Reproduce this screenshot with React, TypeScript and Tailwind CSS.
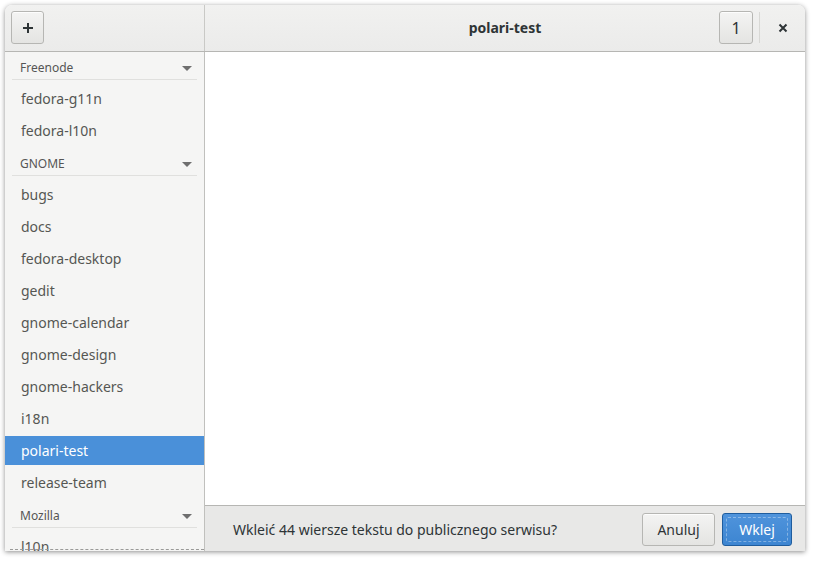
import React from 'react';

type Row = { kind: 'net'; name: string; first?: boolean } | { kind: 'room'; name: string; selected?: boolean };

const rows: Row[] = [
  { kind: 'net', name: 'Freenode', first: true },
  { kind: 'room', name: 'fedora-g11n' },
  { kind: 'room', name: 'fedora-l10n' },
  { kind: 'net', name: 'GNOME' },
  { kind: 'room', name: 'bugs' },
  { kind: 'room', name: 'docs' },
  { kind: 'room', name: 'fedora-desktop' },
  { kind: 'room', name: 'gedit' },
  { kind: 'room', name: 'gnome-calendar' },
  { kind: 'room', name: 'gnome-design' },
  { kind: 'room', name: 'gnome-hackers' },
  { kind: 'room', name: 'i18n' },
  { kind: 'room', name: 'polari-test', selected: true },
  { kind: 'room', name: 'release-team' },
  { kind: 'net', name: 'Mozilla' },
  { kind: 'room', name: 'l10n' },
];

function Arrow() {
  return (
    <svg width="10" height="5" viewBox="0 0 10 5" className="shrink-0">
      <path d="M0 0H10L5 5Z" fill="#6f6f6f" />
    </svg>
  );
}

export default function App() {
  return (
    <div
      className="w-[814px] h-[561px] bg-white pt-[5px] pl-[5px] overflow-hidden"
      style={{ fontFamily: '"Noto Sans", "Open Sans", sans-serif' }}
    >
      <div className="w-[800px] h-[546px] flex flex-col rounded-t-[7px] overflow-hidden shadow-[0_1px_5px_rgba(0,0,0,0.45)] bg-white">
        {/* Header bar */}
        <div className="h-[47px] flex shrink-0 border-b border-[#b6b6b3] bg-gradient-to-b from-[#f1f1f0] to-[#ebebea]">
          <div className="w-[200px] border-r border-[#c9c9c6] flex items-start pt-[6px] pl-[6px]">
            <button className="w-[33px] h-[33px] rounded-[3px] border border-[#b6b6b3] bg-gradient-to-b from-[#f4f4f3] to-[#e4e4e2] flex items-center justify-center shadow-[inset_0_1px_rgba(255,255,255,0.8)]">
              <svg width="12" height="12" viewBox="0 0 12 12">
                <path d="M6 1V11M1 6H11" stroke="#2e3436" strokeWidth="2" />
              </svg>
            </button>
          </div>
          <div className="flex-1 flex items-start relative">
            <div className="absolute inset-x-0 top-[14px] text-center text-[14px] font-bold text-[#2e3436] leading-[18px]">
              polari-test
            </div>
            <div className="ml-auto flex items-start pt-[6px]">
              <button className="w-[34px] h-[33px] rounded-[3px] border border-[#b6b6b3] bg-gradient-to-b from-[#f4f4f3] to-[#e4e4e2] text-[16px] text-[#2e3436] flex items-center justify-center shadow-[inset_0_1px_rgba(255,255,255,0.8)]">
                1
              </button>
              <div className="w-px h-[31px] bg-[#d8d8d5] ml-[6px] mt-[1px]" />
              <div className="w-[45px] h-[33px] flex items-center justify-center">
                <svg width="10" height="10" viewBox="0 0 10 10">
                  <path d="M1.5 1.5L8.5 8.5M8.5 1.5L1.5 8.5" stroke="#2e3436" strokeWidth="2" />
                </svg>
              </div>
            </div>
          </div>
        </div>

        {/* Body */}
        <div className="flex-1 flex min-h-0">
          <div className="w-[200px] border-r border-[#c0c0bd] bg-[#f5f5f4] flex flex-col overflow-hidden relative">
            {rows.map((r, i) =>
              r.kind === 'net' ? (
                <div
                  key={i}
                  className={`mx-[7px] pl-[8px] pr-[5px] flex items-center justify-between border-b border-[#e0e0de] pb-[3px] mb-[2px] text-[12px] leading-[16px] text-[#555] shrink-0 ${r.first ? 'pt-[8px]' : 'pt-[10px]'}`}
                >
                  <span>{r.name}</span>
                  <Arrow />
                </div>
              ) : (
                <div
                  key={i}
                  className={`h-[32px] shrink-0 flex items-center pl-[16px] text-[14px] ${r.selected ? 'bg-[#4a90d9] text-white border-t-2 border-b border-transparent bg-clip-padding' : 'text-[#555753]'}`}
                >
                  {r.name}
                </div>
              )
            )}
            <div className="absolute left-[5px] right-0 bottom-[1px] border-b border-dashed border-[#9a9a98]" />
          </div>

          <div className="flex-1 flex flex-col">
            <div className="flex-1 bg-white" />
            <div className="h-[46px] shrink-0 border-t border-[#b6b6b3] bg-[#e8e8e7] flex items-center pl-[28px] pr-[13px]">
              <span className="text-[14px] text-[#2e3436] mt-[1px]">Wkleić 44 wiersze tekstu do publicznego serwisu?</span>
              <div className="ml-auto flex gap-[7px] mt-[1px]">
                <button className="w-[73px] h-[33px] rounded-[3px] border border-[#b6b6b3] bg-gradient-to-b from-[#f4f4f3] to-[#e4e4e2] text-[14px] text-[#2e3436] shadow-[inset_0_1px_rgba(255,255,255,0.8)]">
                  Anuluj
                </button>
                <button className="w-[70px] h-[33px] rounded-[3px] border border-[#1f5d9e] bg-gradient-to-b from-[#4f94dc] to-[#3d85d1] text-[14px] text-white p-[3px]">
                  <span className="w-full h-full flex items-center justify-center rounded-[2px] border border-dashed border-[rgba(255,255,255,0.35)]">
                    Wklej
                  </span>
                </button>
              </div>
            </div>
          </div>
        </div>
      </div>
    </div>
  );
}
